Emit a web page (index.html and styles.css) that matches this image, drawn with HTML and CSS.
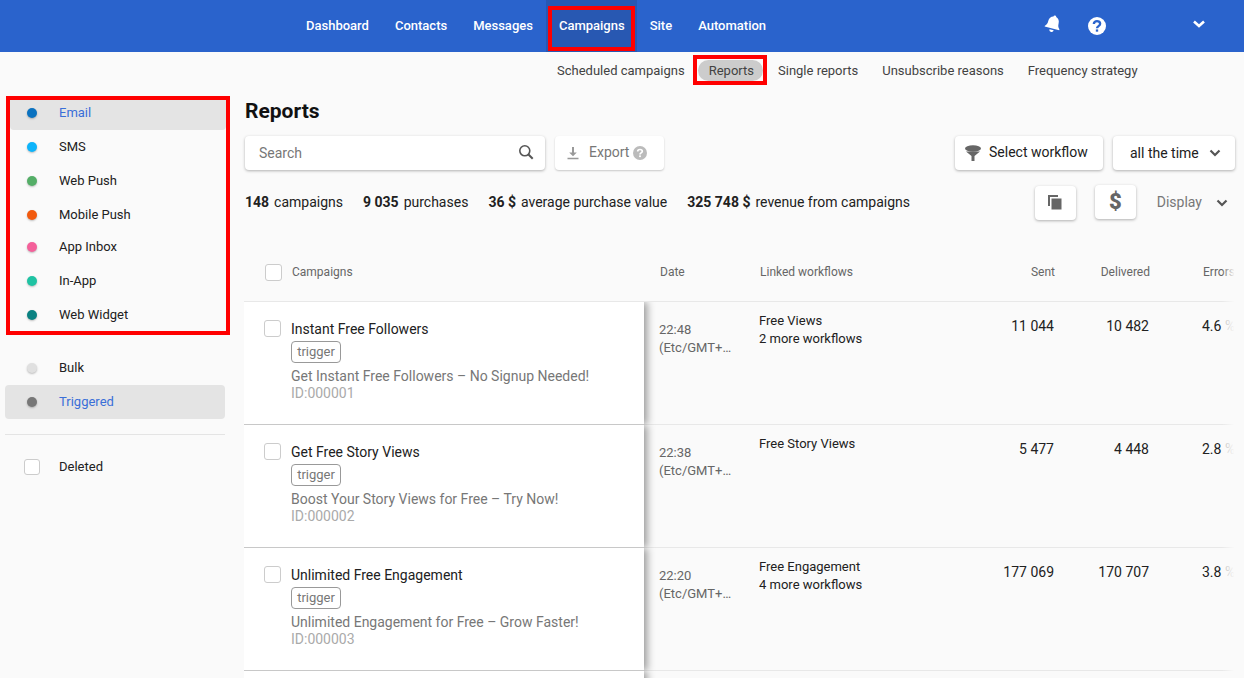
FILE: index.html
```html
<!DOCTYPE html>
<html lang="en">
<head>
<meta charset="utf-8">
<title>Reports</title>
<link rel="stylesheet" href="styles.css">
</head>
<body>
<header class="topbar">
  <nav class="nav">
    <a class="nav-item">Dashboard</a>
    <a class="nav-item">Contacts</a>
    <a class="nav-item">Messages</a>
    <a class="nav-item nav-active">Campaigns</a>
    <a class="nav-item">Site</a>
    <a class="nav-item">Automation</a>
  </nav>
  <div class="top-icons">
    <svg class="bell" width="20" height="20" viewBox="0 0 20 20"><g transform="rotate(14 10 10)"><path fill="#fff" d="M10 1.2c.8 0 1.4.6 1.4 1.3 2.600.7 3.900 2.800 3.900 5.500 0 3 .8 4.400 2.200 5.600v.9H2.500v-.9C3.900 12.400 4.700 11 4.700 8c0-2.700 1.300-4.800 3.900-5.500 0-.7.6-1.300 1.400-1.300z"/><path fill="#fff" d="M7.800 16h4.400a2.200 2.200 0 0 1-4.400 0z"/></g></svg>
    <svg class="help" width="18" height="18" viewBox="0 0 20 20"><circle cx="10" cy="10" r="10" fill="#fff"/><path fill="none" stroke="#2a63cc" stroke-width="2.600" d="M6.500 7.800c0-2.200 1.600-3.300 3.500-3.300s3.500 1.100 3.500 3c0 2.700-3.500 2.500-3.500 5"/><rect x="8.700" y="13.800" width="2.600" height="2.500" fill="#2a63cc"/></svg>
    <svg class="chev-top" width="14" height="10" viewBox="0 0 14 10"><path fill="none" stroke="#fff" stroke-width="2.600" d="M2 2.500l5 4.500 5-4.500"/></svg>
  </div>
</header>

<nav class="subnav">
  <a class="sub-item">Scheduled campaigns</a>
  <a class="sub-item sub-active"><span class="pill">Reports</span></a>
  <a class="sub-item">Single reports</a>
  <a class="sub-item">Unsubscribe reasons</a>
  <a class="sub-item">Frequency strategy</a>
</nav>

<div class="layout">
  <aside class="sidebar">
    <ul class="channels">
      <li class="side-row is-on"><i class="dot c-email"></i>Email</li>
      <li class="side-row"><i class="dot c-sms"></i>SMS</li>
      <li class="side-row"><i class="dot c-web"></i>Web Push</li>
      <li class="side-row"><i class="dot c-mob"></i>Mobile Push</li>
      <li class="side-row row-short"><i class="dot c-inbox"></i>App Inbox</li>
      <li class="side-row"><i class="dot c-inapp"></i>In-App</li>
      <li class="side-row"><i class="dot c-widget"></i>Web Widget</li>
    </ul>
    <ul class="types">
      <li class="side-row"><i class="dot c-bulk"></i>Bulk</li>
      <li class="side-row is-on"><i class="dot c-trig"></i>Triggered</li>
    </ul>
    <div class="side-deleted side-row"><i class="check check-side"></i>Deleted</div>
  </aside>

  <main class="main">
    <h1 class="title">Reports</h1>
    <div class="toolbar">
      <div class="search">
        <span>Search</span>
        <svg width="16" height="16" viewBox="0 0 16 16"><circle cx="6.800" cy="6.800" r="5" fill="none" stroke="#555" stroke-width="1.600"/><path stroke="#555" stroke-width="2" d="M10.500 10.500l4.200 4.200"/></svg>
      </div>
      <div class="btn btn-export">
        <svg width="14" height="14" viewBox="0 0 14 14"><path fill="#999" d="M6 1h2v5.500h2.800L7 10.300 3.200 6.500H6zM1.500 11.800h11v1.400h-11z"/></svg>
        <span class="export-label">Export</span>
        <svg width="14" height="14" viewBox="0 0 14 14"><circle cx="7" cy="7" r="7" fill="#bbb"/><path fill="none" stroke="#fff" stroke-width="1.700" d="M4.700 5.500c0-1.300 1-2 2.300-2s2.300.7 2.300 1.800c0 1.700-2.300 1.500-2.300 3.200"/><rect x="6.100" y="9.400" width="1.800" height="1.700" fill="#fff"/></svg>
      </div>
      <div class="btn btn-workflow">
        <svg width="18" height="18" viewBox="0 0 18 18"><ellipse cx="9" cy="4.500" rx="8" ry="3.200" fill="#666"/><path fill="#666" d="M2 7.500h14L10.500 12v5h-3v-5z"/></svg>
        <span class="workflow-label">Select workflow</span>
      </div>
      <div class="btn btn-time">
        <span>all the time</span>
        <svg width="12" height="8" viewBox="0 0 12 8"><path fill="none" stroke="#555" stroke-width="2.200" d="M1.500 1.500L6 6l4.500-4.500"/></svg>
      </div>
    </div>

    <div class="stats">
      <p class="stat"><b>148</b>campaigns</p>
      <p class="stat"><b>9 035</b>purchases</p>
      <p class="stat"><b>36 $</b>average purchase value</p>
      <p class="stat"><b>325 748 $</b>revenue from campaigns</p>
      <div class="stat-tools">
        <div class="btn btn-square btn-copy">
          <svg width="14" height="15" viewBox="0 0 14 15"><path fill="#666" d="M0 0h10v2H2v9H0z"/><rect x="3.500" y="3.500" width="10" height="11" fill="#666"/></svg>
        </div>
        <div class="btn btn-square btn-dollar">$</div>
        <span class="display">Display</span>
        <svg width="12" height="8" viewBox="0 0 12 8"><path fill="none" stroke="#555" stroke-width="2.200" d="M1.500 1.500L6 6l4.500-4.500"/></svg>
      </div>
    </div>

    <div class="table">
      <div class="thead">
        <div class="th-campaign"><i class="check"></i>Campaigns</div>
        <div class="th-date">Date</div>
        <div class="th-link">Linked workflows</div>
        <div class="th-num">Sent</div>
        <div class="th-num">Delivered</div>
        <div class="th-err">Errors</div>
      </div>

      <div class="row">
        <div class="card">
          <i class="check"></i>
          <div class="card-body">
            <div class="card-name">Instant Free Followers</div>
            <span class="tag">trigger</span>
            <div class="card-sub">Get Instant Free Followers – No Signup Needed!</div>
            <div class="card-id">ID:000001</div>
          </div>
        </div>
        <div class="td-date">22:48<br>(Etc/GMT+…</div>
        <div class="td-link">Free Views<br>2 more workflows</div>
        <div class="td-num">11 044</div>
        <div class="td-num">10 482</div>
        <div class="td-err">4.6 <span>%</span></div>
      </div>

      <div class="row">
        <div class="card">
          <i class="check"></i>
          <div class="card-body">
            <div class="card-name">Get Free Story Views</div>
            <span class="tag">trigger</span>
            <div class="card-sub">Boost Your Story Views for Free – Try Now!</div>
            <div class="card-id">ID:000002</div>
          </div>
        </div>
        <div class="td-date">22:38<br>(Etc/GMT+…</div>
        <div class="td-link">Free Story Views</div>
        <div class="td-num">5 477</div>
        <div class="td-num">4 448</div>
        <div class="td-err">2.8 <span>%</span></div>
      </div>

      <div class="row">
        <div class="card">
          <i class="check"></i>
          <div class="card-body">
            <div class="card-name">Unlimited Free Engagement</div>
            <span class="tag">trigger</span>
            <div class="card-sub">Unlimited Engagement for Free – Grow Faster!</div>
            <div class="card-id">ID:000003</div>
          </div>
        </div>
        <div class="td-date">22:20<br>(Etc/GMT+…</div>
        <div class="td-link">Free Engagement<br>4 more workflows</div>
        <div class="td-num">177 069</div>
        <div class="td-num">170 707</div>
        <div class="td-err">3.8 <span>%</span></div>
      </div>

      <div class="row"><div class="card"></div></div>
      <div class="fade"></div>
    </div>
  </main>
</div>
</body>
</html>
```

FILE: styles.css
```css
* { box-sizing: border-box; }
html, body { margin: 0; height: 678px; overflow: hidden; }
body { background: #fafafa; color: #212121; font: 14px/18px Roboto, "Liberation Sans", sans-serif; }
ul, p, h1 { margin: 0; padding: 0; list-style: none; }
i { display: block; }

/* top bar */
.topbar { height: 52px; background: #2a63cc; display: flex; position: relative; }
.nav { display: flex; margin-left: 293px; }
.nav-item { color: #fff; font-size: 13px; font-weight: 500; line-height: 51px; padding: 0 13px; position: relative; }
.nav-active { background: #2858b2; padding: 0 12px 0 13px; }
.nav-active::after { content: ""; position: absolute; left: 2px; right: 2px; top: 6px; height: 37px; border: 4px solid #f00; }
.top-icons { display: flex; align-items: center; margin-left: 264px; }
.bell { margin-top: -4px; }
.help { margin-left: 25px; }
.chev-top { margin-left: 86px; margin-top: -4px; }

/* sub navigation */
.subnav { height: 38px; display: flex; align-items: center; padding: 0 0 2px 545px; font-size: 13px; }
.sub-item { color: #424242; padding: 0 12px; line-height: 21px; }
.sub-active { padding: 0; position: relative; margin: 0 3px 0 1px; }
.pill { display: block; background: #ccc; border-radius: 11px; padding: 0 9px 0 11px; line-height: 21px; }
.sub-active::after { content: ""; position: absolute; left: -5px; right: -4px; top: -5px; bottom: -4px; border: 4px solid #f00; }

/* layout */
.layout { display: flex; }
.sidebar { width: 245px; flex: none; padding: 6px 20px 0 5px; font-size: 13px; }
.channels { margin-left: 1px; border: 4px solid #f00; width: 224px; height: 239px; }
.side-row { height: 34px; display: flex; align-items: center; padding-left: 22px; border-radius: 4px; }
.side-row .dot { width: 10px; height: 10px; border-radius: 50%; margin-right: 22px; box-shadow: 0 1px 2px rgba(0,0,0,.25); }
.channels .side-row { padding-left: 17px; }
.channels .is-on { height: 30px; padding-bottom: 4px; border-radius: 0 0 4px 4px; }
.channels .row-short { height: 32px; padding-bottom: 2px; }
.channels .side-row:last-child { height: 33px; }
.is-on { background: #e4e4e4; color: #3a6fd8; }
.types { margin-top: 16px; padding-bottom: 15px; border-bottom: 1px solid #e4e4e4; }
.c-email { background: #0a72c0; } .c-sms { background: #0db4fb; } .c-web { background: #54ae67; }
.c-mob { background: #f25a0e; } .c-inbox { background: #f4609a; } .c-inapp { background: #1fc3a3; }
.c-widget { background: #0a8282; } .c-bulk { background: #e0e0e0; } .c-trig { background: #777; }
.check { width: 17px; height: 17px; border: 1px solid #ccc; border-radius: 3px; background: #fff; flex: none; }
.side-deleted { margin-top: 15px; padding-left: 19px; }
.check-side { width: 16px; height: 16px; margin-right: 19px; }

/* main */
.main { flex: 1; min-width: 0; }
.title { font-size: 21px; line-height: 28px; font-weight: 700; color: #111; margin-top: 7px; }
.toolbar { display: flex; margin-top: 11px; height: 34px; padding-right: 9px; }
.search, .btn { background: #fff; border-radius: 4px; box-shadow: 0 1px 3px rgba(0,0,0,.3); display: flex; align-items: center; }
.search { width: 300px; justify-content: space-between; padding: 0 11px 0 14px; color: #777; }
.search svg { margin-top: -2px; }
.btn-export { margin-left: 10px; width: 109px; padding-left: 11px; color: #777; margin-right: auto; box-shadow: 0 1px 2px rgba(0,0,0,.2); }
.export-label { margin: -2px 4px 0 9px; }
.btn-workflow { width: 148px; padding-left: 9px; gap: 7px; }
.workflow-label { margin-top: -2px; }
.btn-time { width: 122px; margin-left: 10px; padding: 0 14px 0 17px; justify-content: space-between; }
.stats { display: flex; align-items: center; height: 35px; margin-top: 15px; padding-right: 16px; }
.stat { margin: -2px 20px 0 0; color: #212121; }
.stat b { font-weight: 700; margin-right: 5px; }
.stat-tools { display: flex; align-items: center; margin-left: auto; }
.btn-square { width: 41px; height: 34px; justify-content: center; }
.btn-dollar { margin-left: 19px; font-size: 22px; font-weight: 900; color: #666; margin-top: -2px; }
.display { color: #777; margin: -2px 14px 0 21px; }

/* table */
.table { margin: 23px 0 0 -1px; width: 990px; position: relative; overflow: hidden; height: 435px; }
.thead { display: grid; grid-template-columns: 416px 100px 179px 116px 95px 84px; height: 59px; align-items: center; font-size: 12px; color: #666; border-bottom: 1px solid #e8e8e8; }
.th-campaign { display: flex; align-items: center; gap: 10px; padding-left: 21px; }
.th-err { padding-left: 53px; white-space: nowrap; }
.th-num { text-align: right; }
.row { display: grid; grid-template-columns: 400px 115px 180px 115px 95px 85px; height: 123px; border-bottom: 1px solid #e8e8e8; }
.card { background: #fff; border-bottom: 1px solid #c8c8c8; box-shadow: 3px 0 8px rgba(0,0,0,.4); clip-path: inset(0 -12px 0 0); display: flex; padding: 18px 0 0 20px; gap: 10px; position: relative; height: 123px; }
.card-name { line-height: 18px; color: #212121; }
.tag { display: block; width: 50px; margin-top: 3px; border: 1px solid #999; border-radius: 4px; color: #777; font-size: 13px; line-height: 20px; text-align: center; }
.card-sub { color: #777; margin-top: 4px; line-height: 18px; }
.card-id { color: #aaa; line-height: 17px; }
.td-date { color: #666; padding: 19px 0 0 15px; line-height: 18px; white-space: nowrap; font-size: 13px; }
.td-link { padding-top: 10px; font-size: 13px; color: #212121; line-height: 18px; }
.td-num { text-align: right; padding-top: 15px; color: #212121; }
.td-err { padding: 15px 0 0 53px; white-space: nowrap; }
.td-err span { color: #bbb; }
.fade { position: absolute; top: 0; right: 0; width: 12px; height: 100%; background: linear-gradient(to right, rgba(250,250,250,0), rgba(250,250,250,.95)); }
```
